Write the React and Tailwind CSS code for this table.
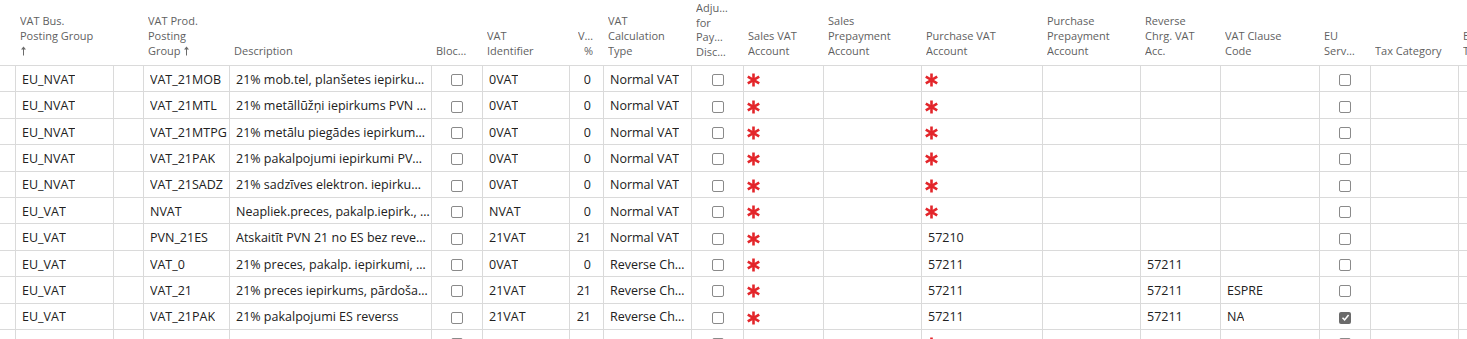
import React from 'react';

const cols = [
  { w: 15 },
  { w: 98, head: ['VAT Bus.', 'Posting Group', '↑'] },
  { w: 30 },
  { w: 86, head: ['VAT Prod.', 'Posting', 'Group ↑'] },
  { w: 202, head: ['Description'] },
  { w: 51, head: ['Bloc…'], center: true },
  { w: 87, head: ['VAT', 'Identifier'] },
  { w: 34, head: ['V…', '%'], right: true },
  { w: 88, head: ['VAT', 'Calculation', 'Type'] },
  { w: 52, head: ['Adju…', 'for', 'Pay…', 'Disc…'], center: true },
  { w: 80, head: ['Sales VAT', 'Account'] },
  { w: 98, head: ['Sales', 'Prepayment', 'Account'] },
  { w: 121, head: ['Purchase VAT', 'Account'] },
  { w: 98, head: ['Purchase', 'Prepayment', 'Account'] },
  { w: 80, head: ['Reverse', 'Chrg. VAT', 'Acc.'] },
  { w: 99, head: ['VAT Clause', 'Code'] },
  { w: 51, head: ['EU', 'Serv…'], center: true },
  { w: 88, head: ['Tax Category'] },
  { w: 90, head: ['E…', 'T…'] },
];

const rows = [
  ['EU_NVAT', 'VAT_21MOB', '21% mob.tel, planšetes iepirku…', false, '0VAT', '0', 'Normal VAT', false, '*', '', '*', '', '', '', false],
  ['EU_NVAT', 'VAT_21MTL', '21% metāllūžņi iepirkums PVN …', false, '0VAT', '0', 'Normal VAT', false, '*', '', '*', '', '', '', false],
  ['EU_NVAT', 'VAT_21MTPG', '21% metālu piegādes iepirkum…', false, '0VAT', '0', 'Normal VAT', false, '*', '', '*', '', '', '', false],
  ['EU_NVAT', 'VAT_21PAK', '21% pakalpojumi iepirkumi PV…', false, '0VAT', '0', 'Normal VAT', false, '*', '', '*', '', '', '', false],
  ['EU_NVAT', 'VAT_21SADZ', '21% sadzīves elektron. iepirku…', false, '0VAT', '0', 'Normal VAT', false, '*', '', '*', '', '', '', false],
  ['EU_VAT', 'NVAT', 'Neapliek.preces, pakalp.iepirk., …', false, 'NVAT', '0', 'Normal VAT', false, '*', '', '*', '', '', '', false],
  ['EU_VAT', 'PVN_21ES', 'Atskaitīt PVN 21 no ES bez reve…', false, '21VAT', '21', 'Normal VAT', false, '*', '', '57210', '', '', '', false],
  ['EU_VAT', 'VAT_0', '21% preces, pakalp. iepirkumi, …', false, '0VAT', '0', 'Reverse Ch…', false, '*', '', '57211', '', '57211', '', false],
  ['EU_VAT', 'VAT_21', '21% preces iepirkums, pārdoša…', false, '21VAT', '21', 'Reverse Ch…', false, '*', '', '57211', '', '57211', 'ESPRE', false],
  ['EU_VAT', 'VAT_21PAK', '21% pakalpojumi ES reverss', false, '21VAT', '21', 'Reverse Ch…', false, '*', '', '57211', '', '57211', 'NA', true],
  ['', '', '', false, '', '', '', false, '', '', '*', '', '', '', false],
];

const Asterisk = () => (
  <svg width="13" height="14" viewBox="0 0 13 14" className="shrink-0">
    <g stroke="#e3262b" strokeWidth="2.6" strokeLinecap="butt">
      <line x1="6.5" y1="0.5" x2="6.5" y2="13.5" />
      <line x1="0.8" y1="3.6" x2="12.2" y2="10.4" />
      <line x1="0.8" y1="10.4" x2="12.2" y2="3.6" />
    </g>
  </svg>
);

const Check = ({ on }) =>
  on ? (
    <span className="w-3 h-3 rounded-[2px] bg-[#6b6b6b] flex items-center justify-center">
      <svg width="9" height="9" viewBox="0 0 9 9">
        <path d="M1.5 4.8 L3.6 6.9 L7.6 2" fill="none" stroke="#fff" strokeWidth="1.6" />
      </svg>
    </span>
  ) : (
    <span className="w-3 h-3 rounded-[2px] border border-[#8a8a8a] bg-white" />
  );

const SortArrow = () => (
  <svg width="7" height="10" viewBox="0 0 7 10" className="inline-block align-[-1px]">
    <path d="M3.5 9.5 V2" stroke="#6b6b6b" strokeWidth="1" />
    <path d="M1 3.6 L3.5 0.5 L6 3.6 Z" fill="#6b6b6b" />
  </svg>
);

const HeadLine = ({ text }) => {
  if (text === '↑') return <div><SortArrow /></div>;
  if (text.endsWith(' ↑'))
    return (
      <div className="whitespace-nowrap">
        {text.slice(0, -2)} <SortArrow />
      </div>
    );
  return <div className="whitespace-nowrap overflow-hidden">{text}</div>;
};

// which column each value of a row goes in
const dataCols = [1, 3, 4, 5, 6, 7, 8, 9, 10, 11, 12, 13, 14, 15, 16];

const Cell = ({ col, value }) => {
  const c = cols[col];
  let inner = null;
  if (typeof value === 'boolean') inner = <Check on={value} />;
  else if (value === '*') inner = <Asterisk />;
  else inner = <span className="truncate">{value}</span>;
  return (
    <div
      style={{ width: c.w }}
      className={`shrink-0 h-full flex items-center pt-[3px] border-l border-[#dadada] overflow-hidden ${
        c.center ? 'justify-center' : c.right ? 'justify-end pr-3' : value === '*' ? 'pl-[3px]' : 'pl-[6px]'
      }`}
    >
      {inner}
    </div>
  );
};

const App = () => {
  return (
    <div className="w-[1467px] h-[339px] overflow-hidden bg-white font-['Open_Sans',sans-serif] text-[#212121]">
      <div className="flex h-[66px] border-b border-[#dadada] w-max">
        {cols.map((c, i) => (
          <div
            key={i}
            style={{ width: c.w }}
            className={`shrink-0 flex flex-col justify-end pb-[7px] text-[11px] leading-[15px] text-[#5f5f5f] ${
              c.right ? 'items-end pr-[10px]' : 'pl-[5px] pr-1'
            }`}
          >
            {(c.head || []).map((t, j) => (
              <HeadLine key={j} text={t} />
            ))}
          </div>
        ))}
      </div>
      {rows.map((r, i) => (
        <div key={i} className="flex h-[26.4px] border-b border-[#dadada] w-max text-[12.5px]">
          <div className="w-[15px] shrink-0" />
          {dataCols.map((col, k) => (
            <React.Fragment key={k}>
              {col === 3 && <div className="w-[30px] shrink-0 border-l border-[#dadada]" />}
              <Cell col={col} value={r[k]} />
            </React.Fragment>
          ))}
          <div className="w-[88px] shrink-0 border-l border-[#dadada]" />
          <div className="w-[90px] shrink-0 border-l border-[#dadada]" />
        </div>
      ))}
    </div>
  );
};

export default App;
